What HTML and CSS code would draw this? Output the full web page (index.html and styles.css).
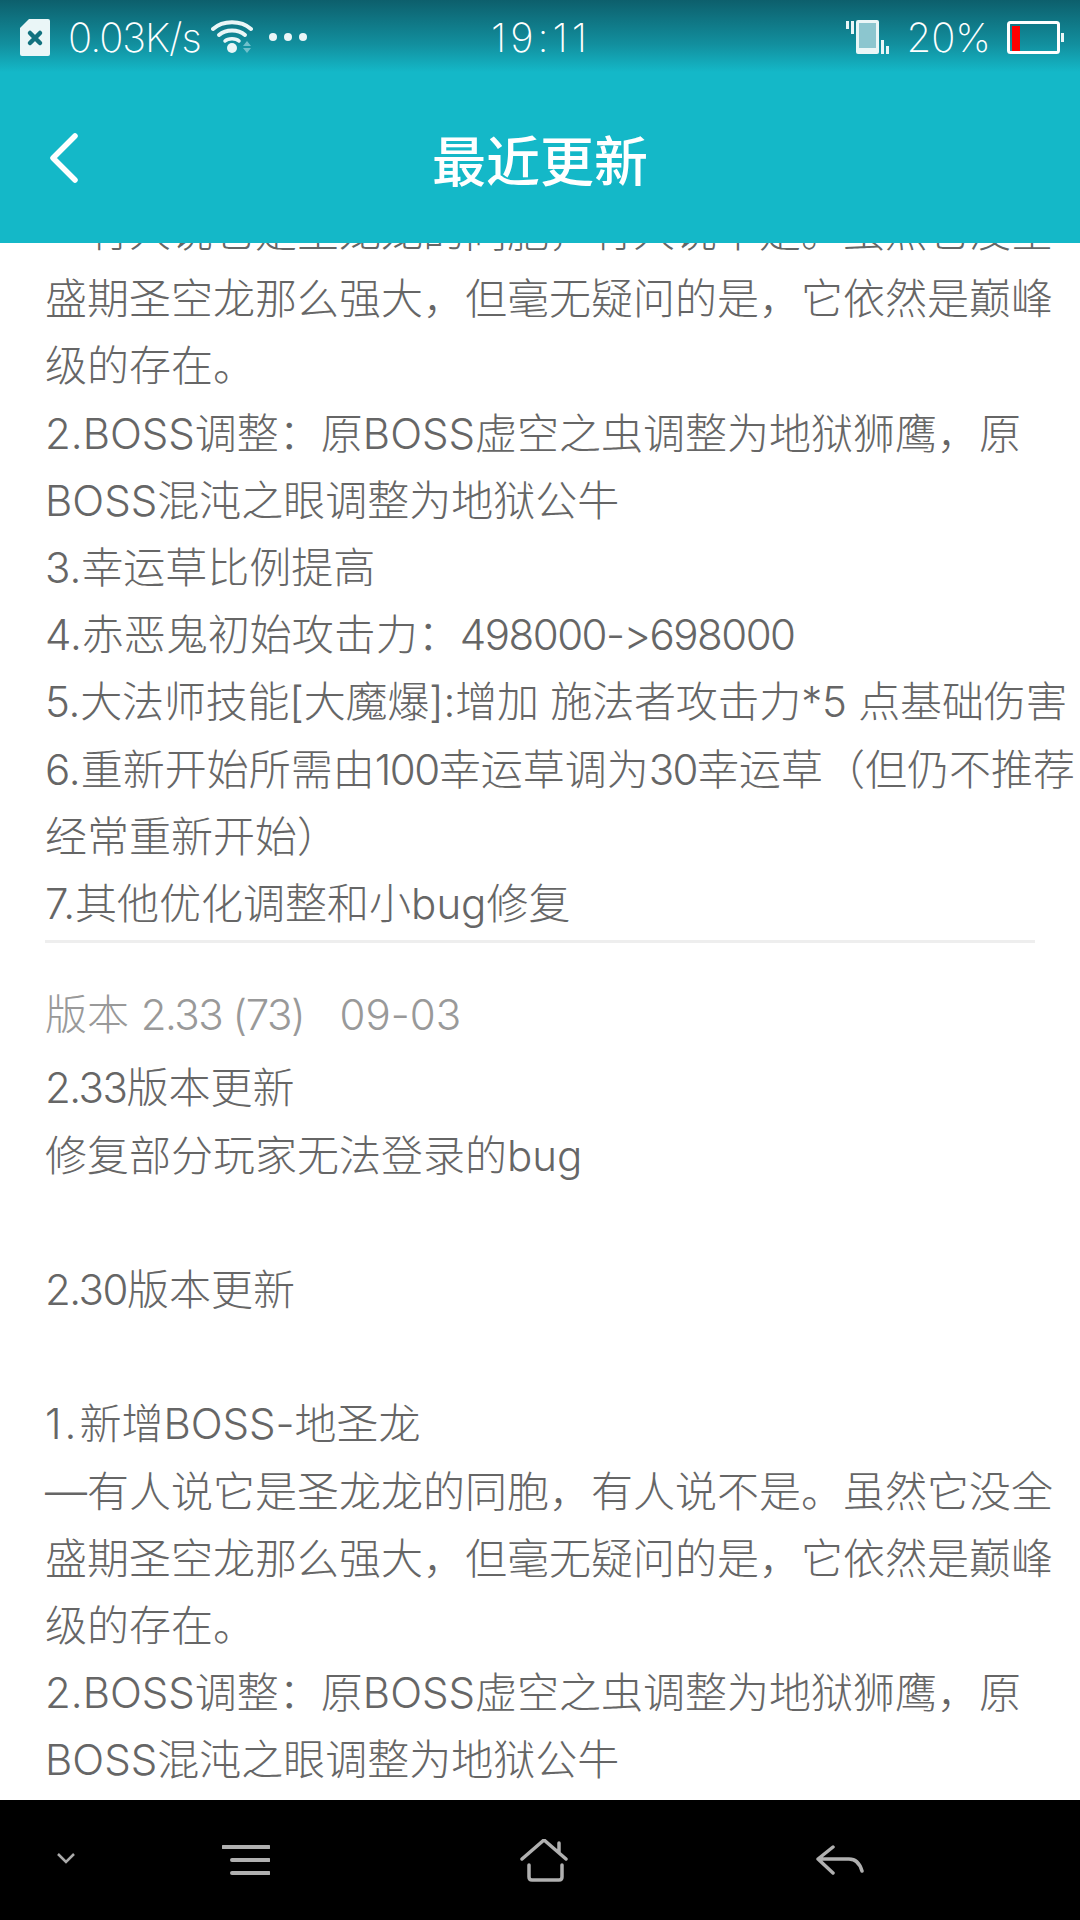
FILE: index.html
```html
<!DOCTYPE html>
<html lang="zh-CN">
<head>
    <meta charset="UTF-8">
    <meta name="viewport" content="width=device-width, initial-scale=1.0">
    <title>最近更新</title>
    <link rel="stylesheet" href="styles.css">
</head>
<body>
    <div class="screen">
        <header class="top">
            <!-- Status bar -->
            <div class="status">
                <div class="status-left">
                    <svg class="ic-sim" width="30" height="37" viewBox="0 0 30 37">
                        <path d="M9 0H28a2 2 0 0 1 2 2V35a2 2 0 0 1-2 2H2a2 2 0 0 1-2-2V9z" fill="#eaf6f7"/>
                        <path d="M10 14l10 10M20 14L10 24" stroke="#12727f" stroke-width="4.5" stroke-linecap="round"/>
                    </svg>
                    <span class="speed">0.03K/s</span>
                    <svg class="ic-wifi" width="42" height="34" viewBox="0 0 42 34">
                        <path d="M2 9C12 0 30 0 40 9" fill="none" stroke="#eaf6f7" stroke-width="4" stroke-linecap="round"/>
                        <path d="M8 15C15 9 27 9 34 15" fill="none" stroke="#eaf6f7" stroke-width="4" stroke-linecap="round"/>
                        <path d="M14 21C17 18 25 18 28 21" fill="none" stroke="#eaf6f7" stroke-width="3.5" stroke-linecap="round"/>
                        <circle cx="21" cy="28" r="5" fill="#eaf6f7"/>
                        <path d="M32 26l4-5 4 5zM32 28h8l-4 5z" fill="#6fc0cb"/>
                    </svg>
                    <div class="dots"><i></i><i></i><i></i></div>
                </div>
                <div class="clock">19:11</div>
                <div class="status-right">
                    <svg class="ic-vibrate" width="43" height="36" viewBox="0 0 43 36">
                        <path d="M0 2h3v8H0zM5 2h3v13H5z" fill="#eaf6f7"/>
                        <rect x="10" y="1" width="23" height="34" rx="2" fill="#eaf6f7"/>
                        <rect x="13" y="4" width="17" height="25" fill="#8cc6cf"/>
                        <path d="M35 21h3v14h-3zM40 27h3v8h-3z" fill="#eaf6f7"/>
                    </svg>
                    <span class="percent">20%</span>
                    <svg class="ic-battery" width="57" height="33" viewBox="0 0 57 33">
                        <rect x="1.5" y="1.5" width="50" height="30" rx="2" fill="none" stroke="#fff" stroke-width="3"/>
                        <rect x="5" y="5" width="8" height="25" fill="#ff0000"/>
                        <rect x="54" y="12" width="3" height="9" fill="#eaf6f7"/>
                    </svg>
                </div>
            </div>
            <!-- Title bar -->
            <div class="titlebar">
                <svg class="ic-back" width="30" height="50" viewBox="0 0 30 50">
                    <path d="M26 3L4 25l22 22" fill="none" stroke="#fff" stroke-width="5.5" stroke-linecap="round" stroke-linejoin="round"/>
                </svg>
                <h1 class="title">最近更新</h1>
            </div>
        </header>

        <main class="content">
            <div class="scroller">
                <p>—有人说它是圣龙龙的同胞，有人说不是。虽然它没全盛期圣空龙那么强大，但毫无疑问的是，它依然是巅峰级的存在。</p>
                <p>2.BOSS调整：原BOSS虚空之虫调整为地狱狮鹰，原BOSS混沌之眼调整为地狱公牛</p>
                <p>3.幸运草比例提高</p>
                <p>4.赤恶鬼初始攻击力：<span class="num">498000-&gt;698000</span></p>
                <p class="tight">5.大法师技能[大魔爆]:增加 施法者攻击力*5 点基础伤害</p>
                <p>6.重新开始所需由<span class="num">100</span>幸运草调为<span class="num">30</span>幸运草（但仍不推荐经常重新开始）</p>
                <p>7.其他优化调整和小bug修复</p>
                <hr class="divider">
                <p class="version">版本 <span class="num">2.33 (73)</span>&nbsp;&nbsp; 09-03</p>
                <p><span class="num">2.33</span>版本更新</p>
                <p>修复部分玩家无法登录的bug</p>
                <p>&nbsp;</p>
                <p><span class="num">2.30</span>版本更新</p>
                <p>&nbsp;</p>
                <p><span class="wide">1.</span>新增BOSS-地圣龙</p>
                <p>—有人说它是圣龙龙的同胞，有人说不是。虽然它没全盛期圣空龙那么强大，但毫无疑问的是，它依然是巅峰级的存在。</p>
                <p>2.BOSS调整：原BOSS虚空之虫调整为地狱狮鹰，原BOSS混沌之眼调整为地狱公牛</p>
            </div>
        </main>

        <!-- Navigation keys -->
        <nav class="keys">
            <svg class="key-hide" width="20" height="12" viewBox="0 0 20 12">
                <path d="M2 2l8 8 8-8" fill="none" stroke="#aaa" stroke-width="2.5"/>
            </svg>
            <svg class="key-menu" width="48" height="30" viewBox="0 0 48 30">
                <path d="M1 2h46M10 15h37M10 28h37" stroke="#b0b0b0" stroke-width="4" stroke-linecap="round"/>
            </svg>
            <svg class="key-home" width="48" height="44" viewBox="0 0 48 44">
                <path d="M2 20L24 1l22 19M39 4v9" fill="none" stroke="#b0b0b0" stroke-width="3.5" stroke-linecap="round" stroke-linejoin="round"/>
                <path d="M9 26v12q0 3 3 3h27q3 0 3-3V26" fill="none" stroke="#b0b0b0" stroke-width="3.5" stroke-linecap="round"/>
            </svg>
            <svg class="key-back" width="48" height="30" viewBox="0 0 48 30">
                <path d="M17 2L2 14l15 14M2 14H33c7 0 11 5 13 12" fill="none" stroke="#b0b0b0" stroke-width="3.5" stroke-linecap="round" stroke-linejoin="round"/>
            </svg>
        </nav>
    </div>
</body>
</html>
```

FILE: styles.css
```css
html, body {
    margin: 0;
    padding: 0;
}
body {
    font-family: Inter, "Noto Sans CJK SC", sans-serif;
    font-variant-ligatures: no-contextual;
    background: #fff;
}
.screen {
    width: 1080px;
    height: 1920px;
    display: flex;
    flex-direction: column;
    overflow: hidden;
}

/* top area */
.top {
    height: 243px;
    flex: none;
    background: linear-gradient(to bottom, #0d5f6c 0, #12909f 45px, #14b8c8 72px);
    color: #fff;
    position: relative;
    z-index: 1;
}
.status {
    height: 74px;
    display: flex;
    align-items: center;
    justify-content: space-between;
    padding: 0 16px 0 20px;
    font-size: 40px;
    font-weight: 200;
    position: relative;
}
.status-left, .status-right {
    display: flex;
    align-items: center;
}
.speed {
    margin-left: 18px;
    letter-spacing: -1px;
}
.ic-wifi {
    margin-left: 10px;
}
.dots {
    display: flex;
    gap: 7px;
    margin-left: 16px;
}
.dots i {
    display: block;
    width: 8px;
    height: 8px;
    border-radius: 50%;
    background: #eaf6f7;
}
.clock {
    position: absolute;
    left: 491px;
    top: 13px;
    letter-spacing: 4px;
}
.percent {
    margin-left: 17px;
}
.ic-battery {
    margin-left: 16px;
}
.titlebar {
    height: 169px;
    display: flex;
    align-items: center;
    justify-content: center;
    position: relative;
}
.ic-back {
    position: absolute;
    left: 49px;
    top: 59px;
}
.title {
    margin: 0;
    font-size: 54px;
    font-weight: 500;
    font-family: "Noto Sans CJK SC", sans-serif;
}

/* list */
.content {
    flex: 1;
    overflow: hidden;
    padding: 0 0 0 45px;
    color: #666;
    font-size: 42px;
    font-weight: 300;
    line-height: 67.2px;
}
.scroller {
    margin-top: -45px;
}
.content p {
    margin: 0;
}
.num {
    letter-spacing: -1.5px;
}
.wide {
    letter-spacing: 3px;
}
.content .tight {
    letter-spacing: -0.2px;
}
.divider {
    border: 0;
    height: 3px;
    background: #eee;
    margin: 3px 45px 0 0;
}
.content .version {
    color: #999;
    margin: 38px 0 6px;
}

/* bottom keys */
.keys {
    height: 120px;
    flex: none;
    background: #000;
    position: relative;
}
.keys svg {
    position: absolute;
}
.key-hide { left: 56px; top: 52px; }
.key-menu { left: 222px; top: 45px; }
.key-home { left: 520px; top: 39px; }
.key-back { left: 816px; top: 45px; }
```
